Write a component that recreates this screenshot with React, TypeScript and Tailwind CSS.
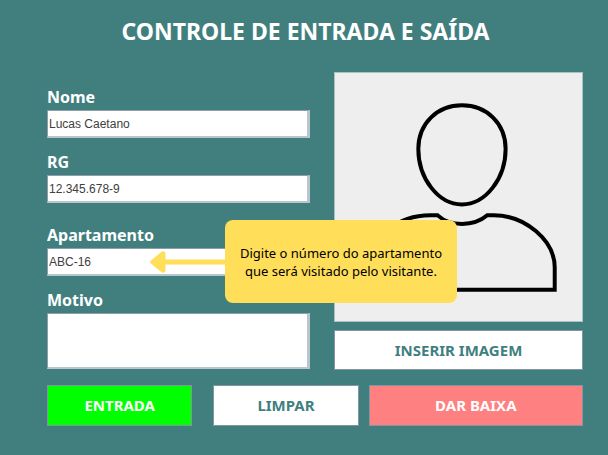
import type { ReactNode } from "react";

const boxClass =
  "block w-full border-t border-l border-r-3 border-b-2 border-t-[#8f9dab] border-l-[#8f9dab] border-r-[#b9c5cc] border-b-[#b9c5cc] bg-white px-px font-['Liberation_Sans',Arial,sans-serif] text-[12px] text-[#404040] outline-none";

const buttonClass = "border border-[#8494a3] text-[15px] font-bold";

function Field({ id, label, children }: { id: string; label: string; children: ReactNode }) {
  return (
    <div>
      <label htmlFor={id} className="block pb-0.5 text-[16px] leading-[22px] font-bold text-white">
        {label}
      </label>
      <div className="relative">{children}</div>
    </div>
  );
}

function Hint({ id }: { id: string }) {
  return (
    <div className="absolute -top-7 left-[103px] z-10 flex items-center" id={id} role="tooltip">
      <svg width="75" height="24" viewBox="0 0 75 22" className="shrink-0" aria-hidden="true">
        <path d="M12 11H75" stroke="#ffde59" strokeWidth="5" />
        <path
          d="M1.2 9.3 11.2 1C13.2 -.6 15.5 .4 15.5 3V19C15.5 21.6 13.2 22.6 11.2 21L1.2 12.7C0 11.7 0 10.3 1.2 9.3Z"
          fill="#ffde59"
        />
      </svg>
      <p className="flex h-[83px] w-[232px] items-center justify-center rounded-lg bg-[#ffde59] text-center text-[13px] leading-[18px] whitespace-nowrap text-black">
        Digite o número do apartamento
        <br />
        que será visitado pelo visitante.
      </p>
    </div>
  );
}

function Avatar() {
  return (
    <svg
      viewBox="0 0 249 250"
      className="block w-full border border-[#a9c2c2] bg-[#eeeeee]"
      fill="none"
      stroke="#000"
      strokeWidth="4"
      role="img"
      aria-label="Foto do visitante"
    >
      <path d="M128 32.500C103 32.500 84 51 84 76.500C84 106 104 132.500 128 132.500C152 132.500 172 106 172 76.500C172 51 153 32.500 128 32.500Z" />
      <path d="M34 218.500V194C34 166 64 143.500 96 143.500H103.500C116 155 140 155 153.500 143.500H160C192 143.500 221.500 169 221.500 196V218.500Z" />
    </svg>
  );
}

export default function App() {
  return (
    <main className="min-h-screen bg-[#417f7f] pt-[15px] pr-[25px] pb-7 pl-[47px] font-['Noto_Sans',Tahoma,sans-serif]">
      <h1 className="mr-[19px] text-center text-[23px] leading-8 font-bold text-white">
        CONTROLE DE ENTRADA E SAÍDA
      </h1>
      <form onSubmit={(event) => event.preventDefault()}>
        <div className="mt-[25px] grid grid-cols-[263fr_249fr] gap-6">
          <div className="flex flex-col gap-[13px] pt-3.5">
            <Field id="nome" label="Nome">
              <input id="nome" type="text" defaultValue="Lucas Caetano" className={`${boxClass} h-7`} />
            </Field>
            <Field id="rg" label="RG">
              <input id="rg" type="text" defaultValue="12.345.678-9" className={`${boxClass} h-7`} />
            </Field>
            <div className="pt-2">
              <Field id="apartamento" label="Apartamento">
                <input
                  id="apartamento"
                  type="text"
                  defaultValue="ABC-16"
                  aria-describedby="dica"
                  className={`${boxClass} h-7`}
                />
                <Hint id="dica" />
              </Field>
            </div>
            <Field id="motivo" label="Motivo">
              <textarea id="motivo" className={`${boxClass} h-14 resize-none`} />
            </Field>
          </div>
          <div className="flex flex-col gap-2">
            <Avatar />
            <button type="button" className={`${buttonClass} h-10 bg-white text-[#417f7f]`}>
              INSERIR IMAGEM
            </button>
          </div>
        </div>
        <div className="mt-[15px] flex">
          <div className="grid grow grid-cols-2 gap-[21px]">
            <button type="submit" className={`${buttonClass} h-[41px] bg-[#00ff00] text-white`}>
              ENTRADA
            </button>
            <button type="reset" className={`${buttonClass} h-[41px] bg-white text-[#417f7f]`}>
              LIMPAR
            </button>
          </div>
          <button type="button" className={`${buttonClass} ml-2.5 h-[41px] w-2/5 bg-[#ff8080] text-white`}>
            DAR BAIXA
          </button>
        </div>
      </form>
    </main>
  );
}
